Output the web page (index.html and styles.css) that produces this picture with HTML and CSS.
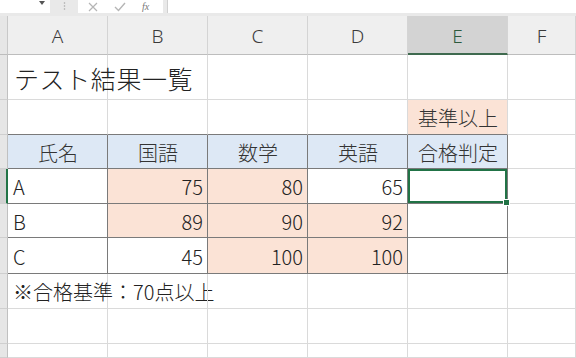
FILE: index.html
```html
<!DOCTYPE html>
<html lang="ja">
<head>
    <meta charset="UTF-8">
    <title>テスト結果一覧</title>
    <link rel="stylesheet" href="styles.css">
</head>
<body>
    <div class="formula-bar">
        <div class="name-box"><span class="caret"></span></div>
        <div class="grip">
            <svg width="3" height="10" viewBox="0 0 3 10"><circle cx="1.5" cy="2" r="0.8" fill="#a8a8a8"/><circle cx="1.5" cy="5" r="0.8" fill="#a8a8a8"/><circle cx="1.5" cy="8" r="0.8" fill="#a8a8a8"/></svg>
        </div>
        <div class="fx-box">
            <svg width="10" height="10" viewBox="0 0 10 10"><path d="M1 1 L9 9 M9 1 L1 9" stroke="#b5b5b5" stroke-width="1.2" fill="none"/></svg>
            <svg width="12" height="10" viewBox="0 0 12 10"><path d="M1 5 L4.5 8.5 L11 1" stroke="#b5b5b5" stroke-width="1.4" fill="none"/></svg>
            <span class="fx">fx</span>
        </div>
        <div class="formula-input"></div>
    </div>

    <div class="sheet">
        <!-- column headers -->
        <div class="corner"></div>
        <div class="col-head">A</div>
        <div class="col-head">B</div>
        <div class="col-head">C</div>
        <div class="col-head">D</div>
        <div class="col-head active">E</div>
        <div class="col-head">F</div>

        <!-- row 1 -->
        <div class="row-head"></div>
        <div class="cell title">テスト結果一覧</div>
        <div class="cell"></div>
        <div class="cell"></div>
        <div class="cell"></div>
        <div class="cell"></div>
        <div class="cell"></div>

        <!-- row 2 -->
        <div class="row-head"></div>
        <div class="cell above"></div>
        <div class="cell above"></div>
        <div class="cell above"></div>
        <div class="cell above"></div>
        <div class="cell above orange center">基準以上</div>
        <div class="cell"></div>

        <!-- row 3 -->
        <div class="row-head"></div>
        <div class="cell tbl head">氏名</div>
        <div class="cell tbl head">国語</div>
        <div class="cell tbl head">数学</div>
        <div class="cell tbl head">英語</div>
        <div class="cell tbl head">合格判定</div>
        <div class="cell"></div>

        <!-- row 4 -->
        <div class="row-head active"></div>
        <div class="cell tbl">A</div>
        <div class="cell tbl orange num">75</div>
        <div class="cell tbl orange num">80</div>
        <div class="cell tbl num">65</div>
        <div class="cell tbl selected"></div>
        <div class="cell"></div>

        <!-- row 5 -->
        <div class="row-head"></div>
        <div class="cell tbl">B</div>
        <div class="cell tbl orange num">89</div>
        <div class="cell tbl orange num">90</div>
        <div class="cell tbl orange num">92</div>
        <div class="cell tbl"></div>
        <div class="cell"></div>

        <!-- row 6 -->
        <div class="row-head"></div>
        <div class="cell tbl">C</div>
        <div class="cell tbl num">45</div>
        <div class="cell tbl orange num">100</div>
        <div class="cell tbl orange num">100</div>
        <div class="cell tbl"></div>
        <div class="cell"></div>

        <!-- row 7 -->
        <div class="row-head"></div>
        <div class="cell note">※合格基準：70点以上</div>
        <div class="cell"></div>
        <div class="cell"></div>
        <div class="cell"></div>
        <div class="cell"></div>
        <div class="cell"></div>

        <!-- row 8 -->
        <div class="row-head"></div>
        <div class="cell"></div>
        <div class="cell"></div>
        <div class="cell"></div>
        <div class="cell"></div>
        <div class="cell"></div>
        <div class="cell"></div>

        <!-- row 9 -->
        <div class="row-head"></div>
        <div class="cell"></div>
        <div class="cell"></div>
        <div class="cell"></div>
        <div class="cell"></div>
        <div class="cell"></div>
        <div class="cell"></div>
    </div>
</body>
</html>
```

FILE: styles.css
```css
body {
    margin: 0;
    background: #ffffff;
    font-family: "Noto Sans CJK JP", "Noto Sans", sans-serif;
    color: #222;
    overflow: hidden;
}
.formula-bar {
    display: flex;
    align-items: flex-start;
    height: 16px;
    background: #e9e9e9;
}
.name-box {
    position: relative;
    width: 50px;
    height: 13px;
    background: #fff;
}
.caret {
    position: absolute;
    right: 5px;
    top: 1px;
    border-left: 3px solid transparent;
    border-right: 3px solid transparent;
    border-top: 4px solid #555;
}
.grip {
    display: flex;
    justify-content: center;
    width: 28px;
    height: 13px;
    padding-top: 1px;
    box-sizing: border-box;
}
.fx-box {
    display: flex;
    align-items: center;
    gap: 16px;
    width: 85px;
    height: 13px;
    padding-left: 10px;
    box-sizing: border-box;
    background: #fff;
}
.fx {
    font-family: "Liberation Serif", serif;
    font-style: italic;
    font-size: 10px;
    color: #777;
    line-height: 10px;
}
.formula-input {
    flex: 1;
    height: 13px;
    margin-left: 4px;
    background: #fff;
    border-left: 1px solid #d0d0d0;
}
.sheet {
    display: grid;
    grid-template-columns: 8px 100px 100px 100px 100px 100px 1fr;
    grid-template-rows: 39px 45px 35px 34px 35px 34px 36px 35px 35px 14px;
}
.corner {
    background: #e6e6e6;
    border-right: 1px solid #c8c8c8;
    border-bottom: 1px solid #bdbdbd;
    box-sizing: border-box;
}
.col-head {
    display: flex;
    align-items: center;
    justify-content: center;
    background: #efefef;
    border-right: 1px solid #d4d4d4;
    border-bottom: 1px solid #bdbdbd;
    box-sizing: border-box;
    font-family: "Noto Sans", sans-serif;
    font-weight: 300;
    font-size: 19px;
    color: #3a3a3a;
    padding-top: 2px;
}
.col-head.active {
    background: #d3d3d3;
    border-bottom: 2px solid #3f6a4f;
    color: #2d5a3d;
}
.row-head {
    background: #e6e6e6;
    border-right: 1px solid #c0c0c0;
    border-bottom: 1px solid #cfcfcf;
    box-sizing: border-box;
}
.row-head.active {
    background: #d2d2d2;
    border-right: 2px solid #217346;
}
.cell {
    display: flex;
    align-items: center;
    padding: 1px 4px 0 5px;
    border-right: 1px solid #dadada;
    border-bottom: 1px solid #dadada;
    box-sizing: border-box;
    font-size: 20px;
    font-weight: 300;
    white-space: nowrap;
    color: #222;
}
.cell.above {
    border-bottom-color: #7a7a7a;
}
.cell.tbl {
    border-right-color: #7a7a7a;
    border-bottom-color: #7a7a7a;
}
.cell.head {
    justify-content: center;
    background: #dde8f5;
    color: #333;
}
.cell.center {
    justify-content: center;
    color: #333;
}
.cell.orange {
    background: #fbe3d6;
}
.cell.num {
    justify-content: flex-end;
}
.cell.title {
    font-size: 25px;
    padding-left: 6px;
    letter-spacing: 0.6px;
    overflow: visible;
}
.cell.note {
    overflow: visible;
    padding-left: 5px;
}
.cell.selected {
    position: relative;
    box-shadow: inset 0 0 0 2px #217346;
}
.cell.selected::after {
    content: "";
    position: absolute;
    right: -3px;
    bottom: -3px;
    width: 5px;
    height: 5px;
    background: #217346;
    border: 1px solid #fff;
}
```
